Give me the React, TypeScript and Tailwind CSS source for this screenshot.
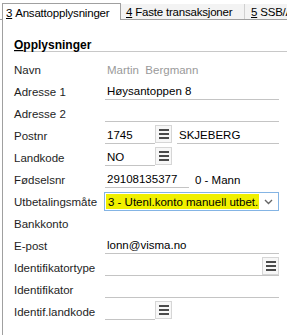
const font = { fontFamily: '"Liberation Sans", Arial, sans-serif' };

function ListButton() {
  return (
    <div className="w-[17px] h-[18px] shrink-0 border border-[#d6d6d6] bg-[#f7f7f7] flex flex-col items-center justify-center gap-[2px]">
      <div className="w-[10px] h-[2px] bg-[#4a4a4a]" />
      <div className="w-[10px] h-[2px] bg-[#4a4a4a]" />
      <div className="w-[10px] h-[2px] bg-[#4a4a4a]" />
    </div>
  );
}

function Row({ label, children }: { label: string; children?: React.ReactNode }) {
  return (
    <div className="h-[22px] flex items-start">
      <div className="w-[91px] shrink-0 pt-[4px] text-[#1e1e1e]">{label}</div>
      <div className="flex-1 flex items-start">{children}</div>
    </div>
  );
}

function Field({ value, className = '' }: { value?: string; className?: string }) {
  return (
    <div className={`h-[19px] border-b border-[#c4c4c4] flex items-end pb-[1px] pl-[2px] text-black ${className}`}>
      {value}
    </div>
  );
}

export default function App() {
  return (
    <div className="w-[287px] h-[335px] bg-white overflow-hidden text-[11.5px] leading-[14px]" style={font}>
      {/* Tabs */}
      <div className="h-[20px] flex items-end whitespace-nowrap text-[11.5px] tracking-[-0.2px]">
        <div className="w-[2px] h-[17px] border-b border-[#a0a0a0]" />
        <div className="w-[119px] h-[17px] shrink-0 border-t border-l border-r border-[#a0a0a0] bg-white pl-[3px] pt-[2px] text-black">
          <span className="underline">3</span>&nbsp;Ansattopplysninger
        </div>
        <div className="flex-1 min-w-0 h-[16px] flex bg-[#f3f3f3] border-b border-[#a0a0a0] text-black overflow-hidden">
          <div className="w-[124px] shrink-0 pl-[5px] pt-[1px] border-r border-[#d0d0d0]">
            <span className="underline">4</span>&nbsp;Faste transaksjoner
          </div>
          <div className="pl-[6px] pt-[1px]">
            <span className="underline">5</span>&nbsp;SSB/A
          </div>
        </div>
      </div>

      {/* Panel */}
      <div className="ml-[2px] h-[315px] border-l border-[#a0a0a0] pl-[11px]">
        <div className="pt-[18px] h-[32px] border-b border-[#c8c8c8] font-bold text-[12px] text-black">
          <span className="underline">O</span>pplysninger
        </div>
        <div className="pt-[7px] pr-[8px]">
          <Row label="Navn">
            <div className="pt-[4px] pl-[2px] text-[#9a9a9a]">Martin&nbsp;&nbsp;Bergmann</div>
          </Row>
          <Row label="Adresse 1">
            <Field value="Høysantoppen 8" className="flex-1" />
          </Row>
          <Row label="Adresse 2">
            <Field className="flex-1" />
          </Row>
          <Row label="Postnr">
            <Field value="1745" className="w-[50px]" />
            <ListButton />
            <Field value="SKJEBERG" className="flex-1 ml-[5px]" />
          </Row>
          <Row label="Landkode">
            <Field value="NO" className="w-[50px]" />
            <ListButton />
          </Row>
          <Row label="Fødselsnr">
            <Field value="29108135377" className="w-[84px]" />
            <div className="pt-[4px] pl-[6px] text-black">0 - Mann</div>
          </Row>
          <Row label="Utbetalingsmåte">
            <div className="flex-1 -ml-[1px] mt-[1px] h-[19px] border border-[#84b4e4] bg-white flex items-center">
              <div className="ml-[1px] h-[15px] w-[153px] bg-[#f0f000] flex items-center pl-[2px] text-black whitespace-nowrap">
                3 - Utenl.konto manuell utbet.
              </div>
              <div className="flex-1 flex items-center justify-center">
                <svg width="9" height="6" viewBox="0 0 9 6">
                  <path d="M1 1 L4.5 4.5 L8 1" fill="none" stroke="#666" strokeWidth="1.4" />
                </svg>
              </div>
            </div>
          </Row>
          <Row label="Bankkonto" />
          <Row label="E-post">
            <Field value="lonn@visma.no" className="flex-1" />
          </Row>
          <Row label="Identifikatortype">
            <div className="flex-1 h-[19px] border-b border-[#c4c4c4] flex justify-end">
              <ListButton />
            </div>
          </Row>
          <Row label="Identifikator">
            <Field className="flex-1" />
          </Row>
          <Row label="Identif.landkode">
            <Field className="w-[50px]" />
            <ListButton />
          </Row>
        </div>
      </div>
    </div>
  );
}
